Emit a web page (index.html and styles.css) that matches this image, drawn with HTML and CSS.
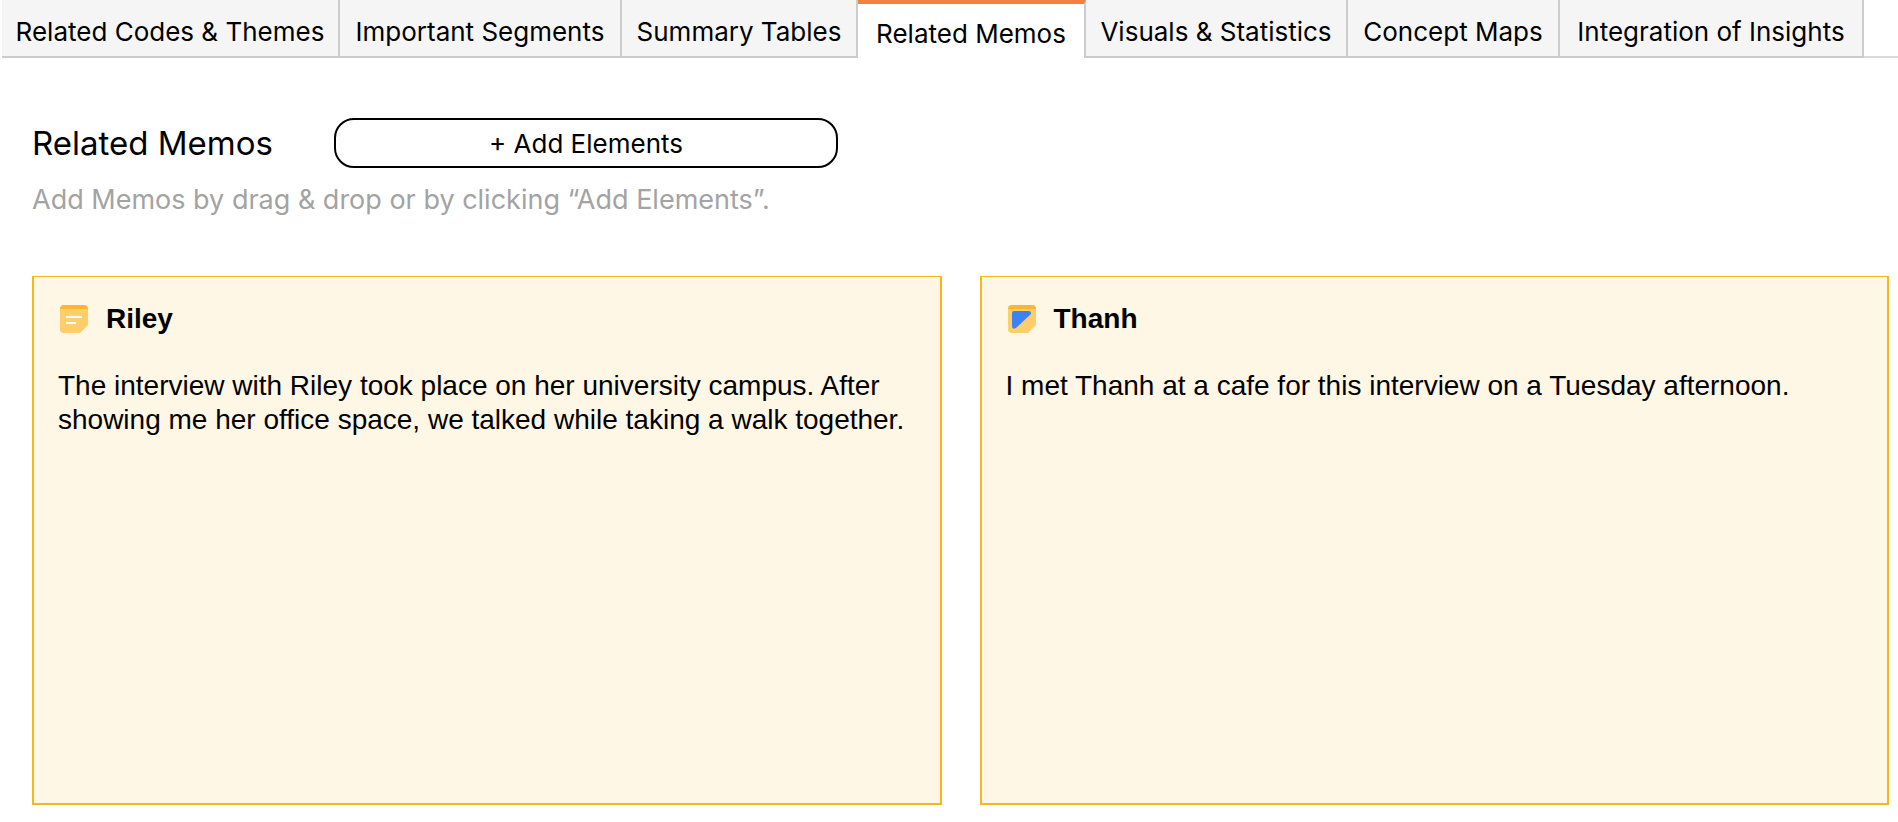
FILE: index.html
```html
<!DOCTYPE html>
<html lang="en">

<head>
    <meta charset="UTF-8">
    <title>Related Memos</title>
    <link rel="stylesheet" href="styles.css">
</head>

<body>
    <nav class="tabs">
        <a class="tab" href="#codes">Related Codes &amp; Themes</a>
        <a class="tab" href="#segments">Important Segments</a>
        <a class="tab" href="#tables">Summary Tables</a>
        <a class="tab active" href="#memos" aria-current="page">Related Memos</a>
        <a class="tab" href="#visuals">Visuals &amp; Statistics</a>
        <a class="tab" href="#maps">Concept Maps</a>
        <a class="tab" href="#insights">Integration of Insights</a>
        <div class="tab-rest"></div>
    </nav>

    <main id="memos">
        <header class="top">
            <h1>Related Memos</h1>
            <button class="add" type="button">+ Add Elements</button>
        </header>
        <p class="hint">Add Memos by drag &amp; drop or by clicking “Add Elements”.</p>

        <section class="memos">
            <article class="memo">
                <div class="memo-head">
                    <svg class="icon" viewBox="0 0 28 28" aria-hidden="true">
                        <path fill="#ffcd69" d="M0 3h28v17l-8 8H4a4 4 0 0 1-4-4z" />
                        <path fill="#ffb534" d="M0 4a4 4 0 0 1 4-4h20a4 4 0 0 1 4 4z" />
                        <path stroke="#fff" stroke-width="2" d="M6 12h16M6 18h10" />
                    </svg>
                    <h2>Riley</h2>
                </div>
                <p>The interview with Riley took place on her university campus. After showing me her office space, we talked while taking a walk together.</p>
            </article>

            <article class="memo">
                <div class="memo-head">
                    <svg class="icon" viewBox="0 0 28 28" aria-hidden="true">
                        <path fill="#ffcd69" d="M0 3h28v17l-8 8H4a4 4 0 0 1-4-4z" />
                        <path fill="#ffb534" d="M0 4a4 4 0 0 1 4-4h20a4 4 0 0 1 4 4z" />
                        <path fill="#3b82f6" d="M6 6h15q2 0 2 2v1L8 23q-4 2-4-2V8q0-2 2-2z" />
                    </svg>
                    <h2>Thanh</h2>
                </div>
                <p>I met Thanh at a cafe for this interview on a Tuesday afternoon.</p>
            </article>
        </section>
    </main>
</body>

</html>
```
FILE: styles.css
```css
* {
    box-sizing: border-box;
}

body {
    margin: 0;
    background-color: white;
    color: black;
    font-family: Inter, sans-serif;
}

h1,
h2,
p {
    margin: 0;
    font-weight: 400;
}

.tabs {
    display: grid;
    grid-template-columns: 338fr 282fr 236fr 228fr 262fr 212fr 304fr 34fr;
    height: 58px;
    padding-left: 2px;
}

.tab {
    padding-top: 16px;
    border-right: 2px solid #ccc;
    border-bottom: 2px solid #ccc;
    background-color: #f5f5f5;
    color: black;
    font-size: 26px;
    line-height: 32px;
    text-align: center;
    text-decoration: none;
    white-space: nowrap;
}

.tab.active {
    padding-top: 14px;
    border-top: 4px solid #f3803f;
    border-bottom: none;
    background-color: white;
}

.tab-rest {
    border-bottom: 2px solid #d9d9d9;
}

main {
    padding: 60px 9px 16px 32px;
}

.top {
    display: flex;
    align-items: center;
}

h1 {
    width: 302px;
    font-size: 33px;
    line-height: 40px;
    white-space: nowrap;
}

.add {
    width: 504px;
    height: 50px;
    padding: 0;
    border: 2px solid black;
    border-radius: 20px;
    background-color: white;
    color: black;
    font-family: inherit;
    font-size: 26px;
}

.hint {
    margin-top: 14px;
    color: #a3a3a3;
    font-size: 27px;
    line-height: 36px;
}

.memos {
    display: grid;
    grid-template-columns: 1fr 1fr;
    gap: 38px;
    margin-top: 58px;
}

.memo {
    min-height: 529px;
    padding: 25px 24px;
    border: 2px solid #f5b81c;
    border-top-width: 1px;
    background-color: #fef7e6;
    font-family: "Liberation Sans", Arial, sans-serif;
    font-size: 28px;
    line-height: 34px;
}

.memo-head {
    display: flex;
    align-items: center;
    gap: 18px;
    margin-bottom: 33px;
    padding-left: 2px;
}

.icon {
    width: 28px;
    height: 28px;
}

h2 {
    font-size: 28px;
    font-weight: 700;
}
```
